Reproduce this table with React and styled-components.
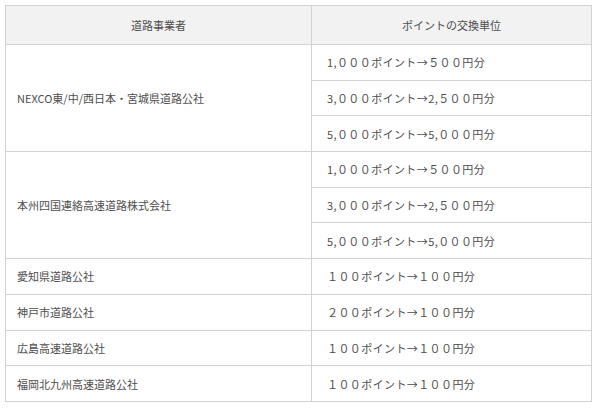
import React from 'react';
import styled, { createGlobalStyle } from 'styled-components';

const GlobalStyle = createGlobalStyle`
  html, body {
    margin: 0;
    padding: 0;
    background: #fff;
  }
  body {
    font-family: "Noto Sans CJK JP", "Noto Sans", sans-serif;
    color: #4d4d4d;
  }
`;

const Page = styled.div`
  padding: 5px 8px 0 5px;
`;

const Table = styled.table`
  width: 587px;
  border-collapse: collapse;
  table-layout: fixed;
  font-size: 11px;
`;

const HeadCell = styled.th`
  height: 38px;
  padding: 0;
  background: #f2f2f2;
  border: 1px solid #d2d2d2;
  font-weight: 400;
  text-align: center;
  vertical-align: middle;
  width: ${(p) => p.$width || 'auto'};
`;

const Row = styled.tr`
  height: 35.7px;
`;

const NameCell = styled.td`
  padding: 0 0 0 11px;
  border: 1px solid #d2d2d2;
  vertical-align: middle;
`;

const ValueCell = styled.td`
  padding: 0 0 0 15px;
  border: 1px solid #d2d2d2;
  vertical-align: middle;
  letter-spacing: 0.4px;
`;

const operators = [
  {
    name: 'NEXCO東/中/西日本・宮城県道路公社',
    rates: ['1,０００ポイント→５００円分', '3,０００ポイント→2,５００円分', '5,０００ポイント→5,０００円分'],
  },
  {
    name: '本州四国連絡高速道路株式会社',
    rates: ['1,０００ポイント→５００円分', '3,０００ポイント→2,５００円分', '5,０００ポイント→5,０００円分'],
  },
  { name: '愛知県道路公社', rates: ['１００ポイント→１００円分'] },
  { name: '神戸市道路公社', rates: ['２００ポイント→１００円分'] },
  { name: '広島高速道路公社', rates: ['１００ポイント→１００円分'] },
  { name: '福岡北九州高速道路公社', rates: ['１００ポイント→１００円分'] },
];

export default function App() {
  return (
    <Page>
      <GlobalStyle />
      <Table>
        <thead>
          <tr>
            <HeadCell $width="305px">道路事業者</HeadCell>
            <HeadCell>ポイントの交換単位</HeadCell>
          </tr>
        </thead>
        <tbody>
          {operators.map((op) =>
            op.rates.map((rate, i) => (
              <Row key={op.name + i}>
                {i === 0 && <NameCell rowSpan={op.rates.length}>{op.name}</NameCell>}
                <ValueCell>{rate}</ValueCell>
              </Row>
            ))
          )}
        </tbody>
      </Table>
    </Page>
  );
}
